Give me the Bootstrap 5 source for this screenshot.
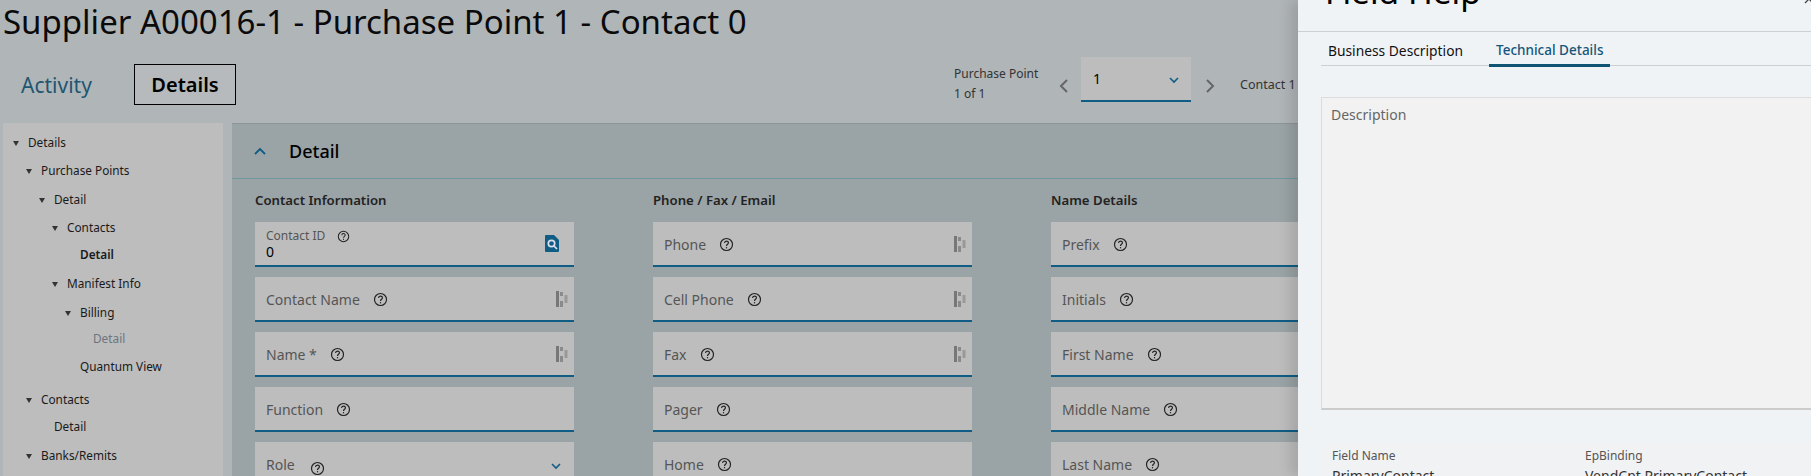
<!doctype html>
<html lang="en"><head><meta charset="utf-8"><title>Field Help</title>
<link rel="stylesheet" href="https://cdn.jsdelivr.net/npm/bootstrap@5.3.0/dist/css/bootstrap.min.css">
<style>
html,body{height:100%}
body{background:#b0b5b8;font-family:"Noto Sans","Open Sans",sans-serif;color:#000;overflow:hidden;height:476px;position:relative}
.page-title{font-size:33px;line-height:40px;font-weight:400;margin:0;padding:2px 0 0 3px;color:#0a0a0a;height:57px}
.top-bar{height:66px;position:relative}
.tab-link{font-size:21px;color:#1f5672;line-height:39px;padding:0 0 0 21px;margin-top:9px;text-decoration:none}
.tab-on{font-size:20px;font-weight:600;border:1px solid #000;height:41px;width:102px;line-height:40px;text-align:center;position:absolute;left:134px;top:7px;color:#000;background:#b6babc}
.tab-row{width:240px}
.pager{position:absolute;left:954px;top:0;height:66px;font-size:12px;color:#333}
.pager-txt{width:105px;padding-top:7px;line-height:20px}
.pick{width:110px;height:45px;background:#bdbdbd;border-bottom:2px solid #0f5d85;font-size:14px;color:#000;padding:11px 12px 0}
.pick-caret{margin-top:9px}
.pg-arrow{width:22px;padding-top:19px}
.pg-next{width:19px;margin-left:15px}
.pager-next-txt{padding-top:19px;margin-left:15px;font-size:12.5px}
.content-row{height:353px}
.side-tree{width:220px;margin-left:3px;background:#bdbdbd;font-size:11.8px;color:#1a1a1a;padding-top:9px;flex:none}
.tree-item{height:22px;display:flex;align-items:center;white-space:nowrap}
.tg4{margin-top:4px}.tg5{margin-top:5px}.tg6{margin-top:6px}.tg7{margin-top:7px}.tg11{margin-top:11px}
.tree-arrow{width:0;height:0;border-left:3px solid transparent;border-right:3px solid transparent;border-top:5px solid #333;margin-right:9px}
.l1{padding-left:10px}.l2{padding-left:23px}.l3{padding-left:36px}.l4{padding-left:49px}.l5{padding-left:62px}
.leaf3{padding-left:51px}.leaf4{padding-left:77px}.leaf5{padding-left:90px}
.main-pane{margin-left:9px;flex:1;background:#9aa3a5;border-top:1px solid #8e9597}
.pane-head{height:55px;border-bottom:1px solid #71999f;padding-left:22px;font-size:18px;font-weight:500;color:#000;gap:23px}
.cols-wrap{padding:0 0 0 23px;gap:79px}
.field-col{width:319px;flex:none}
.col-title{font-size:13.2px;font-weight:600;color:#222;height:43px;padding-top:11px;line-height:20px}
.fld{height:45px;background:#bdbdbd;border-bottom:2px solid #0f5d85;margin-bottom:10px;padding:2px 11px 0;font-size:14px;color:#555;position:relative;gap:13px}
.fld-stack{display:block;padding-top:4px;font-size:12px;line-height:16px}
.fld-stack b{font-weight:400;color:#000;font-size:14px;display:block}
.qm{flex:none;color:#222}
.qm-low{margin-top:8px;margin-left:2px}
.fld-search{position:absolute;right:15px;top:13px}
.fld-dots{position:absolute;right:6px;top:14px}
.fld-caret{position:absolute;right:13px;top:21px}
.help-panel{position:absolute;left:1298px;top:0;right:0;bottom:0;background:#f0f3f6;box-shadow:-8px 0 12px rgba(0,0,0,.12);overflow:hidden}
.help-title{font-size:33.5px;line-height:40px;margin:-29px 0 0;height:61px;padding-left:27px;border-bottom:1px solid #ccd0d3;font-weight:400;color:#000}
.help-close{position:absolute;right:-3px;top:-6px}
.help-tabs{margin-left:23px;height:34px;border-bottom:1px solid #ccd0d3;font-size:13.8px}
.help-tab{padding:0 8px 0 7px;line-height:37px;margin-right:18px;color:#111}
.help-tab-on{padding:0 7px;width:121px;white-space:nowrap;line-height:37px;height:35px;font-size:13.5px;color:#15567a;font-weight:500;border-bottom:3px solid #0f5573}
.desc-box{margin:31px 0 0 23px;width:600px;height:313px;background:#f2f2f2;border:1px solid #dcdcdc;border-bottom:2px solid #ccc;padding:6px 9px;font-size:14px;color:#666}
.meta-row{margin:33px 0 0 23px;gap:5px}
.meta-cell{width:248px;flex:none;height:80px;background:#f1f2f4;padding:4px 11px 0;font-size:12px;color:#555;line-height:18px}
.meta-cell div{font-size:14px;color:#333;margin-top:2px;white-space:nowrap}
</style></head><body>
<h1 class="page-title">Supplier A00016-1 - Purchase Point 1 - Contact 0</h1>
<div class="top-bar d-flex">
 <div class="tab-row d-flex align-items-start"><a class="tab-link">Activity</a><div class="tab-on">Details</div></div>
 <div class="pager d-flex align-items-start">
  <div class="pager-txt">Purchase Point<br>1 of 1</div>
  <div class="pg-arrow"><svg width="9" height="14" viewBox="0 0 9 14" fill="none" stroke="#666" stroke-width="2"><path d="M8 1 2 7l6 6"/></svg></div>
  <div class="pick d-flex justify-content-between"><span>1</span><svg class="pick-caret" width="10" height="7" viewBox="0 0 10 7" fill="none" stroke="#0f5d85" stroke-width="1.6"><path d="M1 1l4 4 4-4"/></svg></div>
  <div class="pg-arrow pg-next"><svg width="9" height="14" viewBox="0 0 9 14" fill="none" stroke="#666" stroke-width="2"><path d="M1 1l6 6-6 6"/></svg></div>
  <div class="pager-next-txt">Contact 1 of 1</div>
 </div>
</div>
<div class="content-row d-flex">
 <nav class="side-tree">
  <div class="tree-item l1"><i class="tree-arrow"></i>Details</div>
  <div class="tree-item l2 tg6"><i class="tree-arrow"></i>Purchase Points</div>
  <div class="tree-item l3 tg7"><i class="tree-arrow"></i>Detail</div>
  <div class="tree-item l4 tg6"><i class="tree-arrow"></i>Contacts</div>
  <div class="tree-item leaf4 fw-semibold tg5">Detail</div>
  <div class="tree-item l4 tg7"><i class="tree-arrow"></i>Manifest Info</div>
  <div class="tree-item l5 tg7"><i class="tree-arrow"></i>Billing</div>
  <div class="tree-item leaf5 text-secondary tg4">Detail</div>
  <div class="tree-item leaf4 tg6">Quantum View</div>
  <div class="tree-item l2 tg11"><i class="tree-arrow"></i>Contacts</div>
  <div class="tree-item leaf3 tg5">Detail</div>
  <div class="tree-item l2 tg7"><i class="tree-arrow"></i>Banks/Remits</div>
 </nav>
 <main class="main-pane">
  <div class="pane-head d-flex align-items-center"><svg width="12" height="8" viewBox="0 0 12 8" fill="none" stroke="#0f5d85" stroke-width="1.8"><path d="M1 7l5-5 5 5"/></svg><span>Detail</span></div>
  <div class="cols-wrap d-flex">
   <div class="field-col"><div class="col-title">Contact Information</div>
    <div class="fld"><div class="fld-stack">Contact ID <svg class="qm ms-2" width="13" height="13" viewBox="0 0 14 14"><use href="#q"/></svg><b>0</b></div><svg class="fld-search" width="14" height="17" viewBox="0 0 14 17"><path fill="#0f5d85" d="M0 1a1 1 0 0 1 1-1h8l5 5v11a1 1 0 0 1-1 1H1a1 1 0 0 1-1-1z"/><circle cx="6.500" cy="8.500" r="3.200" fill="none" stroke="#dde" stroke-width="1.700"/><path d="M9 11l3 3" stroke="#dde" stroke-width="1.700"/></svg></div>
    <div class="fld d-flex align-items-center"><span>Contact Name</span><svg class="qm" width="15" height="15" viewBox="0 0 14 14"><use href="#q"/></svg><svg class="fld-dots" width="12" height="16" viewBox="0 0 12 16"><use href="#d"/></svg></div>
    <div class="fld d-flex align-items-center"><span>Name *</span><svg class="qm" width="15" height="15" viewBox="0 0 14 14"><use href="#q"/></svg><svg class="fld-dots" width="12" height="16" viewBox="0 0 12 16"><use href="#d"/></svg></div>
    <div class="fld d-flex align-items-center"><span>Function</span><svg class="qm" width="15" height="15" viewBox="0 0 14 14"><use href="#q"/></svg></div>
    <div class="fld d-flex align-items-center"><span>Role</span><svg class="qm qm-low" width="15" height="15" viewBox="0 0 14 14"><use href="#q"/></svg><svg class="fld-caret" width="10" height="7" viewBox="0 0 10 7" fill="none" stroke="#0f5d85" stroke-width="1.6"><path d="M1 1l4 4 4-4"/></svg></div>
   </div>
   <div class="field-col"><div class="col-title">Phone / Fax / Email</div>
    <div class="fld d-flex align-items-center"><span>Phone</span><svg class="qm" width="15" height="15" viewBox="0 0 14 14"><use href="#q"/></svg><svg class="fld-dots" width="12" height="16" viewBox="0 0 12 16"><use href="#d"/></svg></div>
    <div class="fld d-flex align-items-center"><span>Cell Phone</span><svg class="qm" width="15" height="15" viewBox="0 0 14 14"><use href="#q"/></svg><svg class="fld-dots" width="12" height="16" viewBox="0 0 12 16"><use href="#d"/></svg></div>
    <div class="fld d-flex align-items-center"><span>Fax</span><svg class="qm" width="15" height="15" viewBox="0 0 14 14"><use href="#q"/></svg><svg class="fld-dots" width="12" height="16" viewBox="0 0 12 16"><use href="#d"/></svg></div>
    <div class="fld d-flex align-items-center"><span>Pager</span><svg class="qm" width="15" height="15" viewBox="0 0 14 14"><use href="#q"/></svg></div>
    <div class="fld d-flex align-items-center"><span>Home</span><svg class="qm" width="15" height="15" viewBox="0 0 14 14"><use href="#q"/></svg></div>
   </div>
   <div class="field-col"><div class="col-title">Name Details</div>
    <div class="fld d-flex align-items-center"><span>Prefix</span><svg class="qm" width="15" height="15" viewBox="0 0 14 14"><use href="#q"/></svg></div>
    <div class="fld d-flex align-items-center"><span>Initials</span><svg class="qm" width="15" height="15" viewBox="0 0 14 14"><use href="#q"/></svg></div>
    <div class="fld d-flex align-items-center"><span>First Name</span><svg class="qm" width="15" height="15" viewBox="0 0 14 14"><use href="#q"/></svg></div>
    <div class="fld d-flex align-items-center"><span>Middle Name</span><svg class="qm" width="15" height="15" viewBox="0 0 14 14"><use href="#q"/></svg></div>
    <div class="fld d-flex align-items-center"><span>Last Name</span><svg class="qm" width="15" height="15" viewBox="0 0 14 14"><use href="#q"/></svg></div>
   </div>
  </div>
 </main>
</div>
<aside class="help-panel">
 <h2 class="help-title">Field Help</h2>
 <svg class="help-close" width="10" height="10" viewBox="0 0 10 10" stroke="#444" stroke-width="1.3"><path d="M1 1l8 8M9 1 1 9"/></svg>
 <div class="help-tabs d-flex"><div class="help-tab">Business Description</div><div class="help-tab-on">Technical Details</div></div>
 <div class="desc-box">Description</div>
 <div class="meta-row d-flex">
  <div class="meta-cell">Field Name<div>PrimaryContact</div></div>
  <div class="meta-cell">EpBinding<div>VendCnt.PrimaryContact</div></div>
 </div>
</aside>
<svg width="0" height="0" class="position-absolute"><defs>
 <g id="q" fill="none" stroke="#222"><circle cx="7" cy="7" r="5.6" stroke-width="1.1"/><path d="M5.2 5.6c0-2.4 3.6-2.4 3.6-.2 0 1.4-1.8 1.4-1.8 3" stroke-width="1.1"/><path d="M7 9.4v1.2" stroke-width="1.1"/></g>
 <g id="d" fill="#777"><rect x="0" y="0" width="3" height="16"/><rect x="4" y="1" width="3" height="4" fill="#8a8a8a"/><rect x="4" y="10" width="3" height="6" fill="#8a8a8a"/><rect x="8.500" y="4" width="3" height="8" fill="#999"/></g>
</defs></svg>
</body></html>
